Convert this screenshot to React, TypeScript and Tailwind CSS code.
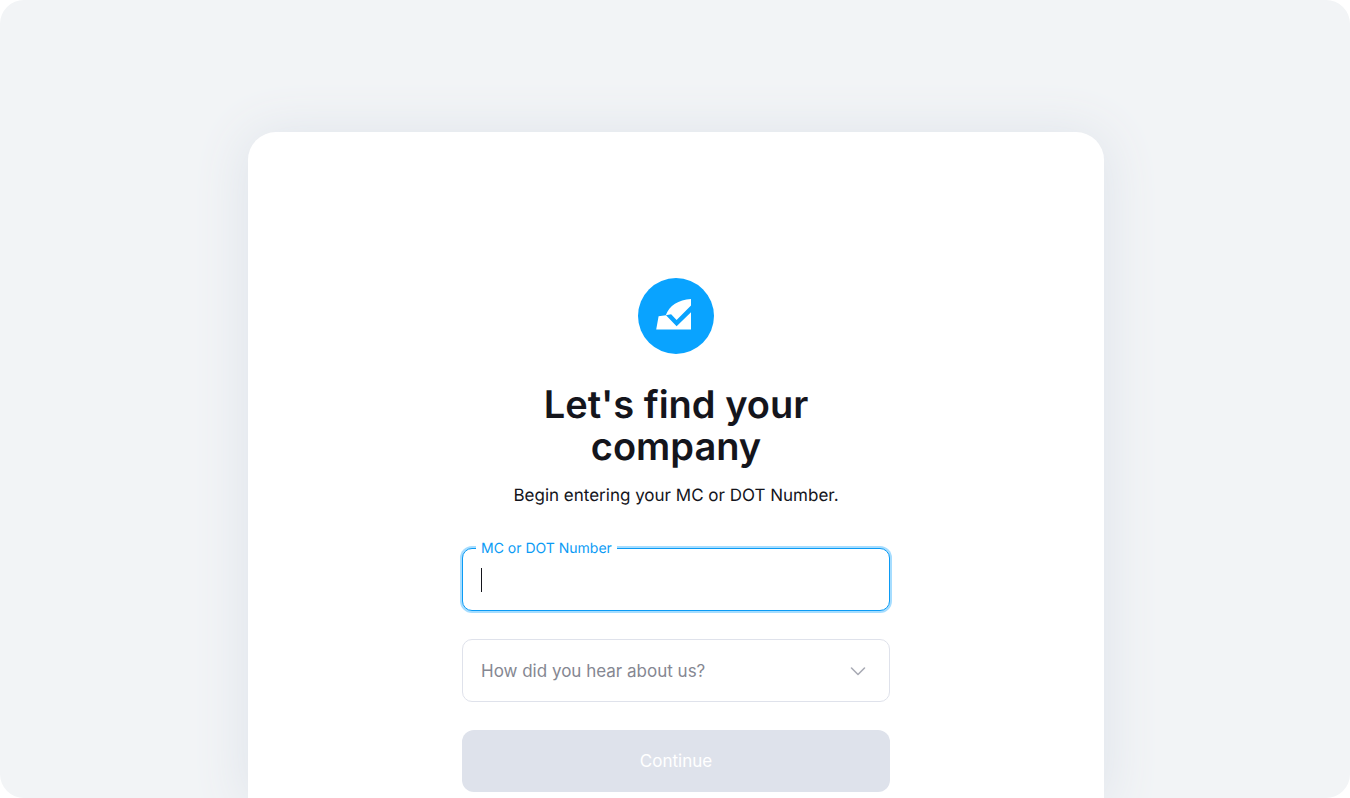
import { useState } from 'react';
import { clsx } from 'clsx';

const sources = ['Search engine', 'Social media', 'Another carrier', 'Broker or shipper'];

function Logo() {
  return (
    <svg className="size-19" viewBox="0 0 76 76" role="img" aria-label="Company logo">
      <circle cx="38" cy="38" r="38" fill="#09a3ff" />
      <path d="M27.8 37.3 C31.2 27.8 40.5 21.6 53 21 V27.5 L38.6 42 L33.1 36.2 Z" fill="#fff" />
      <path d="M20.6 38.3 L28 37.2 L38.6 48.2 L53 34.3 V51.5 H18.2 Z" fill="#fff" />
    </svg>
  );
}

export default function App() {
  const [number, setNumber] = useState('');
  const [source, setSource] = useState('');

  return (
    <div className="bg-white font-['Inter',sans-serif] text-[#14151c] antialiased [text-rendering:geometricPrecision]">
      <main className="flex h-screen flex-col items-center overflow-hidden rounded-3xl bg-[#f2f4f6] pt-33 pl-0.5">
        {/* CARD */}
        <section className="flex w-full max-w-[856px] shrink-0 grow flex-col items-center rounded-t-[28px] bg-white px-6 pt-[146px] shadow-[0_4px_52px_4px_#dfe4eb]">
          <Logo />
          <h1 className="mt-[30px] max-w-80 text-center text-[38px] leading-[42px] font-semibold">
            Let's find your company
          </h1>
          <p className="mt-4 text-[17px] leading-6">Begin entering your MC or DOT Number.</p>

          <form className="mt-10 flex w-full max-w-[428px] flex-col gap-7" onSubmit={(e) => e.preventDefault()}>
            {/* MC / DOT NUMBER */}
            <div className="relative">
              <input
                id="number"
                value={number}
                onChange={(e) => setNumber(e.target.value)}
                className="block h-[63px] w-full rounded-[10px] border border-[#0b9bf5] bg-white px-[18px] text-[17px] caret-transparent ring-2 ring-[#a6ddff] outline-none"
              />
              <label htmlFor="number" className="absolute -top-2 left-3.5 bg-white px-[5px] text-sm leading-[18px] text-[#0b9bf5]">
                MC or DOT Number
              </label>
              {number === '' && <span className="pointer-events-none absolute top-5 left-[19px] h-6 w-px bg-[#14151c]" />}
            </div>

            {/* REFERRAL SOURCE */}
            <div className="relative">
              <select
                aria-label="How did you hear about us?"
                value={source}
                onChange={(e) => setSource(e.target.value)}
                className={clsx(
                  'block h-[63px] w-full appearance-none rounded-[10px] border border-[#dfe2eb] bg-white px-[18px] pt-0.5 text-[17px] outline-none',
                  source ? 'text-[#14151c]' : 'text-[#858792]',
                )}
              >
                <option value="">How did you hear about us?</option>
                {sources.map((s) => (
                  <option key={s}>{s}</option>
                ))}
              </select>
              <svg className="pointer-events-none absolute top-6 right-6 h-4 w-4" viewBox="0 0 16 16" fill="none" stroke="#a9abb5" strokeWidth="1.6" strokeLinecap="round" strokeLinejoin="round">
                <path d="M1.5 5 L8 11.5 L14.5 5" />
              </svg>
            </div>

            <button disabled={!number} className="h-[62px] rounded-xl bg-[#2aa9ff] pt-0.5 text-[17px] text-white disabled:bg-[#dee2eb]">
              Continue
            </button>
          </form>
        </section>
      </main>
    </div>
  );
}
